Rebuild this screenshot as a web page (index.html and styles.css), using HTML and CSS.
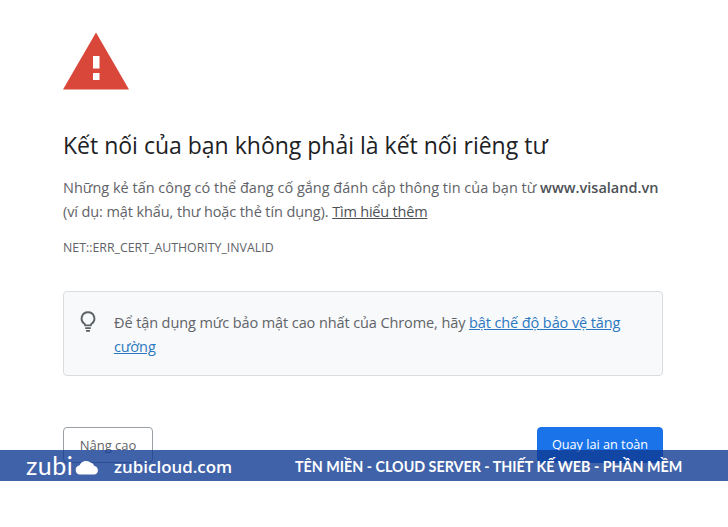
FILE: index.html
```html
<!DOCTYPE html>
<html lang="vi">
<head>
<meta charset="utf-8">
<title>Lỗi bảo mật</title>
<link rel="stylesheet" href="styles.css">
</head>
<body>
<main class="page">
  <svg class="warn" width="66" height="58" viewBox="0 0 66 58" aria-hidden="true">
    <path d="M33 0.500 L66 57.500 H0 Z" fill="#d9463a"/>
    <rect x="30" y="24" width="6.500" height="12.500" fill="#fff"/>
    <rect x="30" y="41" width="6.500" height="7" fill="#fff"/>
  </svg>
  <h1 class="title">Kết nối của bạn không phải là kết nối riêng tư</h1>
  <p class="desc">Những kẻ tấn công có thể đang cố gắng đánh cắp thông tin của bạn từ <b class="host">www.visaland.vn</b><br><span class="desc-sub">(ví dụ: mật khẩu, thư hoặc thẻ tín dụng). <a class="more">Tìm hiểu thêm</a></span></p>
  <p class="code">NET::ERR_CERT_AUTHORITY_INVALID</p>
  <section class="tip">
    <svg class="bulb" width="16" height="21" viewBox="0 0 16 21" aria-hidden="true">
      <path d="M8 1.200a6.300 6.300 0 0 0-3.600 11.500c.6.500.9 1 .9 1.700h5.400c0-.7.3-1.200.9-1.700A6.300 6.300 0 0 0 8 1.200Z" fill="none" stroke="#5f6368" stroke-width="1.900"/>
      <path d="M5.200 17.200h5.600M6 19.800h4" fill="none" stroke="#5f6368" stroke-width="1.800"/>
    </svg>
    <p class="tip-text">Để tận dụng mức bảo mật cao nhất của Chrome, hãy <a class="tip-link">bật chế độ bảo vệ tăng cường</a></p>
  </section>
  <div class="actions">
    <button class="btn btn-ghost">Nâng cao</button>
    <button class="btn btn-primary">Quay lại an toàn</button>
  </div>
</main>
<aside class="banner">
  <span class="logo">zubi</span>
  <svg class="cloud" width="24" height="16" viewBox="0 0 24 15" aria-hidden="true">
    <path d="M5 15a4.600 4.600 0 0 1-.6-9.100A7 7 0 0 1 15 2.800a5.500 5.500 0 0 1 4.400 3.600A4.400 4.400 0 0 1 19.500 15Z" fill="#fff"/>
  </svg>
  <span class="site">zubicloud.com</span>
  <span class="slogan">TÊN MIỀN - CLOUD SERVER - THIẾT KẾ WEB - PHẦN MỀM</span>
</aside>
</body>
</html>
```
FILE: styles.css
```css
html, body {
  margin: 0;
  padding: 0;
  background: #fff;
}
body {
  position: relative;
  height: 527px;
  overflow: hidden;
  font-family: "Open Sans", "Noto Sans", sans-serif;
  color: #5f6368;
}
.page {
  width: 600px;
  margin-left: 63px;
  padding-top: 32px;
  display: flex;
  flex-direction: column;
}
.warn {
  display: block;
}
.title {
  margin: 39px 0 0;
  font-size: 23px;
  line-height: 32px;
  font-weight: 400;
  color: #202124;
  white-space: nowrap;
}
.desc {
  margin: 15px 0 0;
  font-size: 14.500px;
  line-height: 24px;
  white-space: nowrap;
}
.desc-sub {
  letter-spacing: -0.1px;
}
.host {
  font-weight: 600;
  color: #4d5156;
}
.more {
  color: #4d5156;
  text-decoration: underline;
  letter-spacing: -0.2px;
}
.code {
  margin: 15px 0 0;
  font-size: 12.350px;
  line-height: 17px;
}
.tip {
  margin-top: 35px;
  box-sizing: border-box;
  height: 85px;
  display: flex;
  align-items: flex-start;
  gap: 18px;
  padding: 19px 30px 0 16px;
  background: #f8f9fa;
  border: 1px solid #dadce0;
  border-radius: 4px;
}
.bulb {
  flex: none;
}
.tip-text {
  margin: 0;
  font-size: 14.500px;
  line-height: 24px;
  letter-spacing: -0.1px;
}
.tip-link {
  color: #2a78c0;
  text-decoration: underline;
}
.actions {
  margin-top: 51px;
  display: flex;
  justify-content: space-between;
}
.btn {
  box-sizing: border-box;
  height: 36px;
  border-radius: 4px;
  font-family: inherit;
  font-size: 13px;
}
.btn-ghost {
  width: 90px;
  background: #fff;
  border: 1px solid #9aa0a6;
  color: #5f6368;
}
.btn-primary {
  width: 126px;
  background: #1a73e8;
  border: 1px solid #1a73e8;
  color: #fff;
  font-size: 12.700px;
  padding-bottom: 3px;
}
.banner {
  position: absolute;
  left: 0;
  top: 450px;
  width: 100%;
  height: 31px;
  box-sizing: border-box;
  display: flex;
  align-items: center;
  background: rgba(15, 59, 146, 0.8);
  color: #fff;
  padding-left: 26px;
}
.logo {
  font-family: "Lato", sans-serif;
  font-size: 25px;
  line-height: 31px;
  letter-spacing: 0.5px;
  width: 49px;
}
.cloud {
  flex: none;
  margin-top: 2px;
}
.site {
  margin-left: 15px;
  width: 181px;
  padding-top: 1px;
  font-family: "Open Sans", sans-serif;
  font-size: 16.900px;
  font-weight: 600;
  white-space: nowrap;
}
.slogan {
  padding-top: 2px;
  font-family: "Lato", sans-serif;
  font-size: 14.300px;
  font-weight: 700;
  white-space: nowrap;
}
```
